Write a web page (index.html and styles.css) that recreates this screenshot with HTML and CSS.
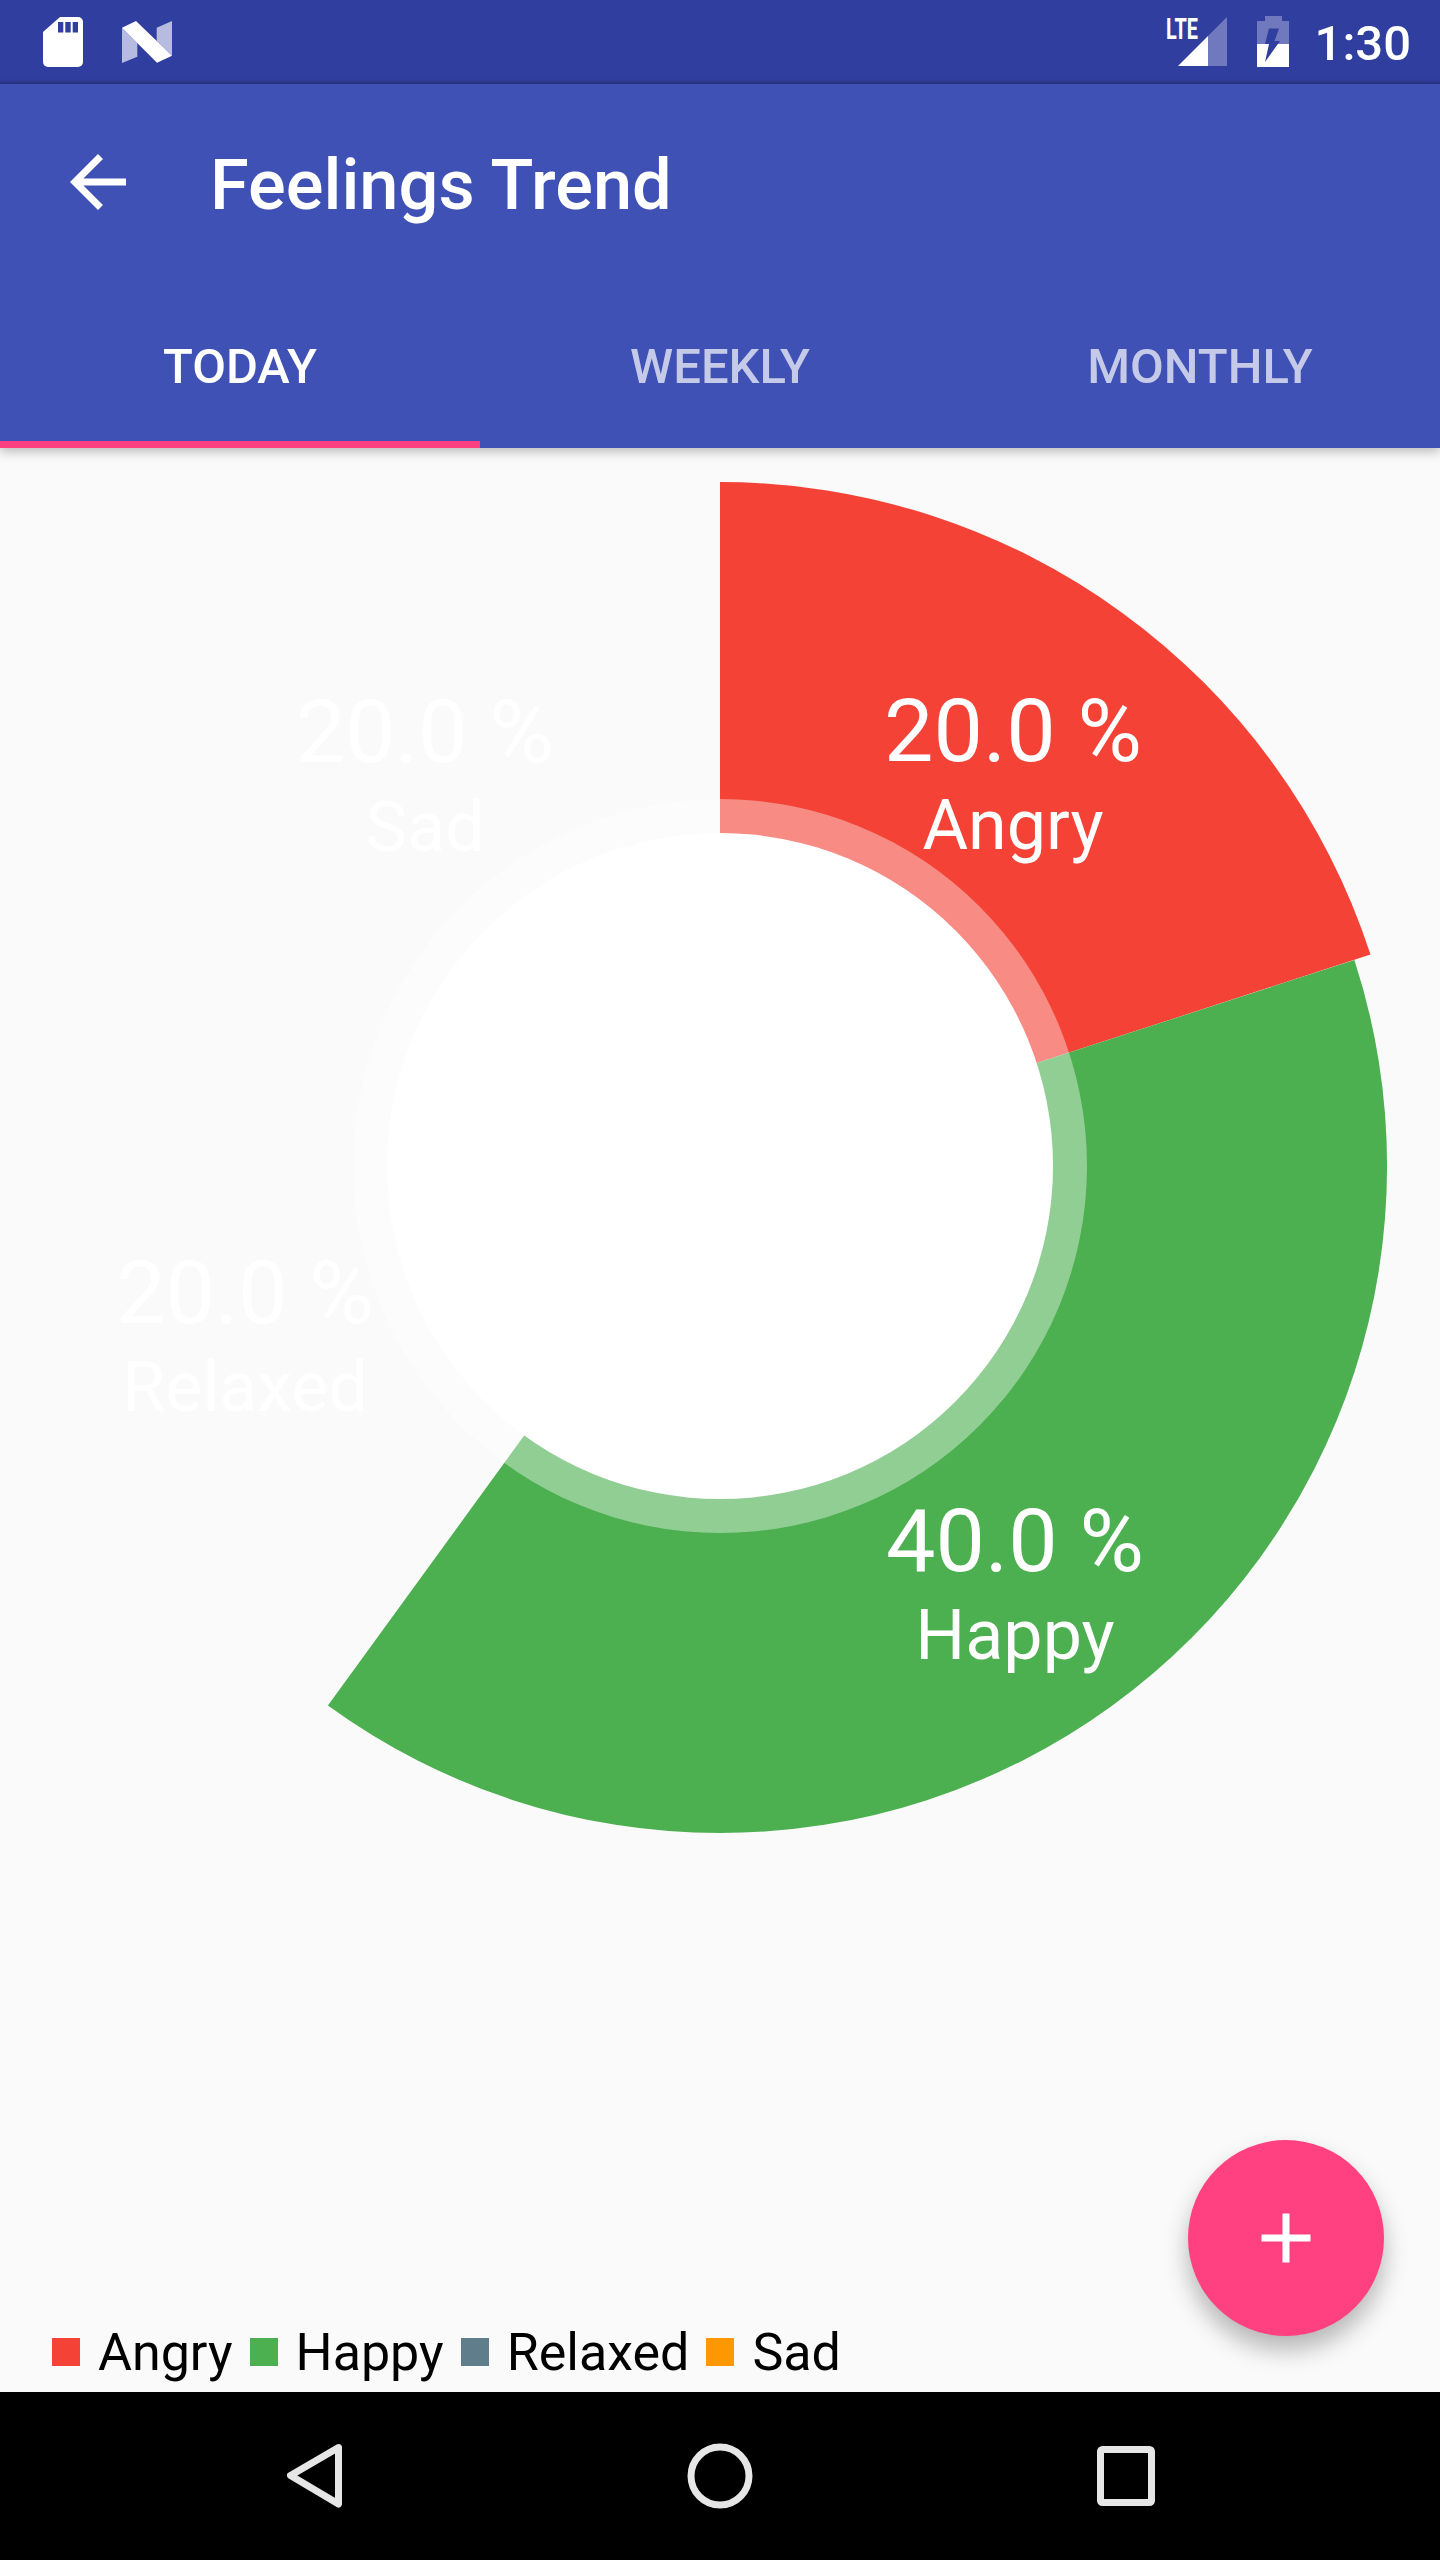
FILE: index.html
```html
<!DOCTYPE html>
<html lang="en">

<head>
    <meta charset="UTF-8">
    <meta name="viewport" content="width=device-width, initial-scale=1.0">
    <title>Feelings Trend</title>
    <link rel="stylesheet" href="styles.css">
</head>

<body>
    <div class="status-bar">
        <svg class="ic-sd" width="40" height="50" viewBox="0 0 40 50">
            <path class="white" d="M17 0H35a5 5 0 0 1 5 5V45a5 5 0 0 1-5 5H5a5 5 0 0 1-5-5V15z" />
            <path class="notch" d="M15 5h5.300v10.500H15zM22.300 5h5.400v10.500h-5.400zM29.700 5H35v10.500h-5.300z" />
        </svg>
        <svg class="ic-n" width="50" height="42" viewBox="0 0 50 42">
            <path class="dim" d="M0 6.700L15.300 22V35.700L0 42zM34.700 20L34.700 6.700L50 0V34.700z" />
            <path class="white" d="M0 6.700L14 0L50 34.700L35 41.700z" />
        </svg>
        <div class="status-right">
            <svg class="ic-signal" width="61" height="59" viewBox="0 0 61 59">
                <path class="dim-2" d="M61 10V59H42V29z" />
                <path class="white" d="M12 59L42 29V59z" />
                <text class="lte" x="0" y="32" textLength="32" lengthAdjust="spacingAndGlyphs">LTE</text>
            </svg>
            <svg class="ic-battery" width="32" height="51" viewBox="0 0 32 51">
                <path class="dim-2" d="M8 0H25V5H32V28H0V5H8z" />
                <path class="white" d="M0 28H32V51H0z" />
                <path class="notch" d="M12 12.500H22L17.500 25H23L8 46L12 28H8z" />
            </svg>
            <span class="time">1:30</span>
        </div>
    </div>

    <header class="app-bar">
        <div class="toolbar">
            <svg class="back-arrow" width="84" height="84" viewBox="0 0 24 24">
                <path class="white" d="M20 11H7.830l5.590-5.590L12 4l-8 8 8 8 1.410-1.410L7.830 13H20v-2z" />
            </svg>
            <h1 class="title">Feelings Trend</h1>
        </div>
        <nav class="tabs">
            <div class="tab active">TODAY</div>
            <div class="tab">WEEKLY</div>
            <div class="tab">MONTHLY</div>
        </nav>
    </header>

    <main class="content">
        <svg class="chart" width="1440" height="1400" viewBox="0 0 1440 1400">
            <path class="slice-angry" d="M720 718L720 34A684 684 0 0 1 1370.500 506.600Z" />
            <path class="slice-happy" d="M720 718L1354.400 511.900A667 667 0 0 1 327.900 1257.600Z" />
            <circle class="ring" cx="720" cy="718" r="367" />
            <circle class="hole" cx="720" cy="718" r="333" />

            <text class="pct" x="1013" y="313">20.0 %</text>
            <text class="name" x="1013" y="401">Angry</text>
            <text class="pct" x="1015" y="1123">40.0 %</text>
            <text class="name" x="1015" y="1211">Happy</text>
            <text class="pct" x="245" y="875">20.0 %</text>
            <text class="name" x="245" y="963">Relaxed</text>
            <text class="pct" x="425" y="314">20.0 %</text>
            <text class="name" x="425" y="403">Sad</text>
        </svg>

        <ul class="legend">
            <li class="legend-item"><span class="key key-angry"></span>Angry</li>
            <li class="legend-item"><span class="key key-happy"></span>Happy</li>
            <li class="legend-item"><span class="key key-relaxed"></span>Relaxed</li>
            <li class="legend-item"><span class="key key-sad"></span>Sad</li>
        </ul>

        <button class="fab" aria-label="Add">
            <svg width="84" height="84" viewBox="0 0 24 24">
                <path class="white" d="M19 13h-6v6h-2v-6H5v-2h6V5h2v6h6v2z" />
            </svg>
        </button>
    </main>

    <div class="nav-bar">
        <svg class="nav-icon" width="56" height="66" viewBox="0 0 56 66">
            <path d="M51.500 4.500L3.500 32.500L51.500 61Z" />
        </svg>
        <svg class="nav-icon" width="66" height="66" viewBox="0 0 66 66">
            <circle cx="33" cy="33" r="29" />
        </svg>
        <svg class="nav-icon" width="58" height="60" viewBox="0 0 58 60">
            <rect x="3.500" y="3.500" width="51" height="53" rx="2" />
        </svg>
    </div>
</body>

</html>
```

FILE: styles.css
```css
html,
body {
    margin: 0;
    padding: 0;
}

body {
    width: 1440px;
    height: 2560px;
    display: flex;
    flex-direction: column;
    font-family: Roboto, "Noto Sans", sans-serif;
    background-color: #fafafa;
    overflow: hidden;
}

.white {
    fill: #fff;
}

.dim {
    fill: #b6bbdf;
}

.dim-2 {
    fill: #7079bd;
}

.notch {
    fill: #303f9f;
}

/* status bar */
.status-bar {
    height: 84px;
    flex: none;
    display: flex;
    align-items: flex-start;
    background-color: #303f9f;
    box-shadow: inset 0 -4px 3px -2px rgba(0, 0, 0, 0.2);
    box-sizing: border-box;
    padding-left: 43px;
}

.ic-sd {
    margin-top: 17px;
}

.ic-n {
    margin-top: 21px;
    margin-left: 39px;
}

.status-right {
    margin-left: auto;
    display: flex;
    align-items: flex-start;
    padding-right: 29px;
}

.ic-signal {
    margin-top: 7px;
}

.ic-battery {
    margin-top: 16px;
    margin-left: 30px;
}

.lte {
    font-size: 29px;
    font-weight: 700;
    fill: #fff;
}

.time {
    margin-left: 26px;
    margin-top: 15px;
    font-size: 49px;
    font-weight: 500;
    line-height: 57px;
    color: #fff;
}

/* app bar */
.app-bar {
    flex: none;
    position: relative;
    z-index: 2;
    background-color: #3f51b5;
    box-shadow: 0 4px 10px rgba(0, 0, 0, 0.25);
}

.toolbar {
    height: 196px;
    display: flex;
    align-items: center;
    padding-left: 56px;
}

.title {
    margin: 6px 0 0 70px;
    font-size: 70.400px;
    font-weight: 500;
    line-height: 84px;
    color: #fff;
}

.tabs {
    height: 168px;
    display: flex;
}

.tab {
    width: 480px;
    box-sizing: border-box;
    display: flex;
    align-items: center;
    justify-content: center;
    font-size: 49px;
    font-weight: 500;
    color: #c5cae9;
    padding-top: 5px;
}

.tab.active {
    color: #fff;
    border-bottom: 7px solid #ff4081;
    padding-top: 12px;
}

/* chart */
.content {
    flex: 1;
    position: relative;
    display: flex;
    flex-direction: column;
}

.chart {
    display: block;
}

.slice-angry {
    fill: #f44336;
}

.slice-happy {
    fill: #4caf50;
}

.ring {
    fill: #fff;
    fill-opacity: 0.39;
}

.hole {
    fill: #fff;
}

.pct,
.name {
    fill: #fff;
    text-anchor: middle;
}

.pct {
    font-size: 88px;
}

.name {
    font-size: 70px;
}

/* legend */
.legend {
    list-style-type: none;
    margin: auto 0 0;
    padding: 0 0 9px 52px;
    display: flex;
    gap: 17px;
    font-size: 52px;
    line-height: 60px;
    color: #000;
}

.legend-item {
    display: flex;
    align-items: center;
    gap: 18px;
}

.key {
    width: 28px;
    height: 28px;
    margin-bottom: 2px;
}

.key-angry {
    background-color: #f44336;
}

.key-happy {
    background-color: #4caf50;
}

.key-relaxed {
    background-color: #607d8b;
}

.key-sad {
    background-color: #ff9800;
}

.fab {
    position: absolute;
    right: 56px;
    bottom: 56px;
    width: 196px;
    height: 196px;
    padding: 0;
    border: none;
    border-radius: 50%;
    background-color: #ff4081;
    box-shadow: 0 14px 24px rgba(0, 0, 0, 0.28);
    display: flex;
    align-items: center;
    justify-content: center;
}

/* nav bar */
.nav-bar {
    height: 168px;
    flex: none;
    background-color: #000;
    display: flex;
    align-items: center;
    justify-content: center;
    gap: 344px;
    padding-left: 2px;
    box-sizing: border-box;
}

.nav-icon {
    fill: none;
    stroke: #e6e6e6;
    stroke-width: 7;
    stroke-linejoin: round;
}
```
